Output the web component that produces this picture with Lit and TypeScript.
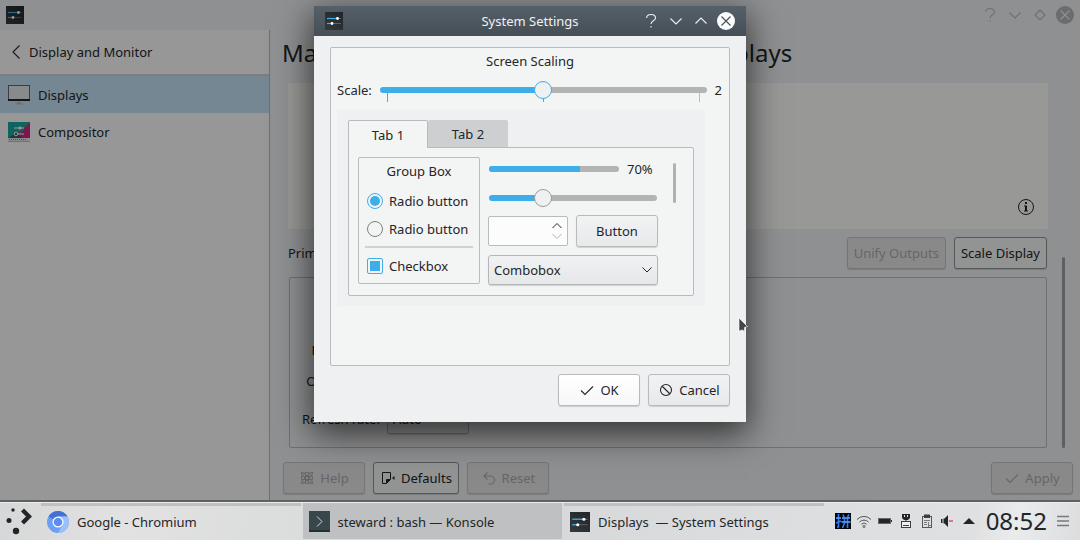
import { LitElement, html, css } from "lit";
import { customElement, state } from "lit/decorators.js";
import { classMap } from "lit/directives/class-map.js";

const stroke = (d: string, size = 16) => html`
  <svg class="icon" width=${size} height=${size} viewBox="0 0 16 16" aria-hidden="true">
    <path d=${d} fill="none" stroke="currentColor" stroke-width="1.1" />
  </svg>`;

const settingsIcon = (size: number) => html`
  <svg class="icon" width=${size} height=${size} viewBox="0 0 18 18" aria-hidden="true">
    <defs><linearGradient id="sg" x1="0" y1="1" x2="1" y2="0">
      <stop offset="0" stop-color="#35393d" /><stop offset="1" stop-color="#222528" />
    </linearGradient></defs>
    <rect width="18" height="18" fill="url(#sg)" />
    <path d="M2 6.5H12" stroke="#3daee9" stroke-width="1.2" />
    <path d="M12 6.5H16M7 11.5H16" stroke="#5d6266" stroke-width="1" />
    <path d="M2 11.5H7" stroke="#3daee9" stroke-width="1.2" />
    <circle cx="12.5" cy="6.5" r="1.4" fill="#fff" />
    <circle cx="7" cy="11.5" r="1.4" fill="#fff" />
  </svg>`;

const icons = {
  help: "M3.500 5C3.800 2.500 5.500 1.500 8 1.500S12.500 2.800 12.500 5C12.500 8 8 7.500 8 11M8 13V14.500",
  down: "M2.500 5.500L8 11L13.500 5.500",
  up: "M2.500 10.500L8 5L13.500 10.500",
  diamond: "M8 3L13 8L8 13L3 8Z",
  back: "M11.500 1.500L5 8L11.500 14.500",
  check: "M2 8.500L6 12.500L14 4.500",
  cancel: "M8 2.500A5.500 5.500 0 1 1 8 13.500A5.500 5.500 0 1 1 8 2.500M4 4L12 12",
  undo: "M6.500 2.500L3 6L6.500 9.500M3 6H9.500A4 4 0 0 1 9.500 14H7.500",
  buoy: "M8 2.500A5.500 5.500 0 1 1 8 13.500A5.500 5.500 0 1 1 8 2.500M8 5.500A2.500 2.500 0 1 1 8 10.500A2.500 2.500 0 1 1 8 5.500M6.500 2.500V13.500M9.500 2.500V13.500M2.500 6.500H13.500M2.500 9.500H13.500M2.500 2.500H4.500M2.500 2.500V4.500M11.500 2.500H13.500V4.500M2.500 11.500V13.500H4.500M13.500 11.500V13.500H11.500",
};

@customElement("app-root")
export class AppRoot extends LitElement {
  static styles = css`
    :host {
      display: grid;
      grid-template-rows: minmax(0, 1fr) auto;
      position: relative;
      height: 100vh;
      overflow: hidden;
      font: 13px/18px "Noto Sans", sans-serif;
      color: #232629;
      background: #dcddde;
    }
    *, *::before, *::after { box-sizing: border-box; }
    button, select, input { font: inherit; color: inherit; margin: 0; }
    h1, h2, p, ul { margin: 0; padding: 0; font-weight: 400; }
    .icon { display: block; flex: none; }

    .window {
      position: relative;
      display: flex;
      flex-direction: column;
      min-height: 0;
      background: #eff0f2;
      border-bottom: 2px solid #a0a1a2;
    }
    .window::after {
      content: "";
      position: absolute;
      inset: 0 0 -2px;
      background: rgba(0, 0, 0, 0.4);
    }
    .bar {
      display: flex;
      align-items: center;
      justify-content: space-between;
      height: 30px;
      padding: 0 6px;
      flex: none;
    }
    .controls { display: flex; align-items: center; gap: 7px; }
    .controls button {
      display: grid;
      place-items: center;
      width: 18px;
      height: 18px;
      padding: 0;
      border: 0;
      border-radius: 9px;
      background: none;
    }
    .window .controls { color: #b7b9bb; }
    .window .controls .close { background: #b2b5b7; color: #eff0f1; }
    .body { display: flex; flex: 1; min-height: 0; }

    .side { width: 270px; flex: none; background: #fcfcfc; border-right: 1px solid #b9babb; }
    .back {
      display: flex;
      align-items: center;
      gap: 5px;
      width: 100%;
      height: 46px;
      padding: 0 8px;
      border: 0;
      border-bottom: 2px solid #d2d3d3;
      background: none;
    }
    .side ul { list-style: none; }
    .side a {
      display: flex;
      align-items: center;
      gap: 8px;
      height: 38px;
      padding: 0 8px;
      color: inherit;
      text-decoration: none;
    }
    .side .current { background: #c1e2f6; height: 37px; }

    .main { flex: 1; min-width: 0; display: flex; flex-direction: column; padding: 5px 7px 6px 13px; }
    .main h1 { margin-left: -1px; font-size: 24px; line-height: 36px; white-space: nowrap; }
    .page { display: grid; grid-template-columns: 1fr auto; margin: 12px 8px 0 5px; flex: 1; min-height: 0; column-gap: 14px; }
    .content { display: flex; flex-direction: column; min-height: 0; }
    .view {
      display: flex;
      align-items: flex-end;
      justify-content: flex-end;
      height: 146px;
      padding: 13px;
      background: #fdfdfc;
    }
    .outputs { display: flex; align-items: center; gap: 8px; padding: 8px 1px 8px 0; }
    .outputs label { flex: 1; }
    .frame {
      display: grid;
      grid-template-columns: max-content auto;
      justify-content: start;
      align-content: end;
      align-items: center;
      gap: 8px 7px;
      height: 171px;
      margin: 0 1px;
      padding: 0 12px 13px;
      border: 1px solid #babbbc;
      border-radius: 2px;
      text-align: right;
    }
    .frame select { width: 82px; }
    .frame .line { line-height: 16px; }
    .frame .box { height: 30px; line-height: 30px; }
    .scroll { width: 3px; height: 191px; margin-top: 174px; border-radius: 2px; background: #9fa0a2; }
    .actions { display: flex; gap: 8px; padding-top: 15px; }
    .actions > :last-child { margin-left: auto; }

    .btn {
      display: inline-flex;
      align-items: center;
      justify-content: center;
      gap: 5px;
      height: 32px;
      min-width: 82px;
      padding: 0 6px;
      border: 1px solid #b9babc;
      border-radius: 3px;
      background: linear-gradient(#f1f2f3, #e8e9eb);
      box-shadow: 0 1px 1px rgba(0, 0, 0, 0.15);
      white-space: nowrap;
    }
    .window .btn { border-color: #8f9192; background: #f4f5f5; }
    .window .btn:disabled { color: #a9abac; border-color: #c3c4c5; background: #e4e5e7; }
    .btn.primary { background: linear-gradient(#ffffff, #f7f7f7); }
    select {
      appearance: none;
      height: 30px;
      padding: 0 5px;
      border: 1px solid #b5b6b8;
      border-radius: 3px;
      background: linear-gradient(#f1f2f3, #e6e7e9);
      box-shadow: 0 1px 1px rgba(0, 0, 0, 0.15);
    }

    .dialog {
      position: absolute;
      left: 314px;
      top: 6px;
      width: 432px;
      background: #eff0f2;
      box-shadow: 0 10px 32px 2px rgba(0, 0, 0, 0.65);
    }
    .dialog .bar {
      display: grid;
      grid-template-columns: 1fr auto 1fr;
      padding: 0 11px;
      color: #eff0f1;
      background: linear-gradient(#54606a, #464e56);
    }
    .dialog .bar h2 { font-size: 13px; line-height: 18px; }
    .dialog .controls { justify-content: flex-end; }
    .dialog .close { background: #fcfcfc; color: #454d54; }
    .dialog .inner { padding: 11px 16px 16px; }
    .group { border: 1px solid #b9bbbd; border-radius: 2px; background: #f3f4f4; }
    .group > h2 { font-size: 13px; line-height: 18px; text-align: center; }
    .scaling { height: 319px; padding: 4px 6px; }
    .scale { display: flex; align-items: center; gap: 8px; height: 39px; }
    .scale output { margin-right: 1px; }
    .slide { position: relative; display: grid; flex: 1; align-items: center; }
    .slide input, .ticks { grid-area: 1 / 1; }
    .ticks { display: flex; justify-content: space-between; padding: 15px 7px 0; }
    .ticks i { width: 1px; height: 9px; background: #3daee9; }
    .ticks i:last-child { background: #babbbc; }

    input[type="range"] {
      appearance: none;
      display: block;
      position: relative;
      width: 100%;
      height: 18px;
      background: none;
    }
    input[type="range"]::-webkit-slider-runnable-track {
      height: 6px;
      border-radius: 3px;
      background: linear-gradient(to right, #3daee9 var(--fill), #b3b3b3 0);
    }
    input[type="range"]::-webkit-slider-thumb {
      appearance: none;
      width: 18px;
      height: 18px;
      margin-top: -6px;
      border: 1px solid #9b9c9e;
      border-radius: 50%;
      background: #eff0f2;
    }
    .scale input[type="range"]::-webkit-slider-thumb { border-color: #3daee9; }

    .preview { width: 368px; padding: 11px 11px 10px; background: #eff0f2; }
    .tabs { display: flex; }
    .tab {
      width: 80px;
      height: 27px;
      padding: 0;
      border: 0;
      border-radius: 2px 2px 0 0;
      background: #cecfd1;
    }
    .tab.active {
      position: relative;
      height: 28px;
      margin-bottom: -1px;
      border: 1px solid #b9bbbd;
      border-bottom: 0;
      background: #f3f4f4;
    }
    .panel {
      display: grid;
      grid-template-columns: 122px 170px auto;
      gap: 8px;
      padding: 9px 16px 10px 9px;
      border: 1px solid #b9bbbd;
      border-radius: 0 2px 2px 2px;
      background: #f3f4f4;
      align-items: start;
    }
    .box-group { padding: 4px 6px 3px; }
    .choice { display: flex; align-items: center; gap: 6px; height: 28px; padding-left: 2px; }
    .box-group h2 { margin-bottom: 7px; }
    .box-group hr { margin: 3px 0 4px; border: 0; border-top: 2px solid #d0d1d2; }
    .choice input {
      appearance: none;
      display: grid;
      place-items: center;
      width: 16px;
      height: 16px;
      border: 1px solid #7e8082;
      background: #f3f4f4;
      flex: none;
    }
    .choice input[type="radio"] { border-radius: 50%; }
    .choice input[type="checkbox"] { border-radius: 2px; }
    .choice input:checked { border-color: #3daee9; }
    .choice input:checked::before { content: ""; width: 10px; height: 10px; background: #3daee9; }
    .choice input[type="radio"]:checked::before { border-radius: 50%; }

    .column { display: flex; flex-direction: column; }
    .progress { display: flex; align-items: center; gap: 8px; height: 24px; padding: 0 1px; }
    progress { appearance: none; display: block; width: 130px; height: 6px; }
    progress::-webkit-progress-bar { background: #b3b3b3; border-radius: 3px; overflow: hidden; }
    progress::-webkit-progress-value { background: #3daee9; }
    .second { padding: 8px 1px; }
    .pair { display: flex; gap: 8px; align-items: center; }
    .spin {
      display: flex;
      align-items: center;
      width: 80px;
      height: 30px;
      padding: 0 2px 0 4px;
      border: 1px solid #b9bbbd;
      border-radius: 2px;
      background: #fcfcfc;
    }
    .spin input { flex: 1; min-width: 0; height: 24px; padding: 0; border: 0; outline: 0; background: none; }
    .spin div { display: grid; }
    .spin button { display: block; height: 10px; padding: 0; border: 0; background: none; }
    .spin .dim { color: #b0b1b2; }
    .combo { display: grid; align-items: center; margin-top: 8px; }
    .combo select, .combo .icon { grid-area: 1 / 1; }
    .combo .icon { justify-self: end; margin-right: 4px; pointer-events: none; z-index: 1; }
    .vbar { width: 3px; height: 40px; margin: 6px 0 0 7px; border-radius: 2px; background: #b0b1b2; }
    .buttons { display: flex; justify-content: flex-end; gap: 8px; padding-top: 8px; }

    .pointer { position: absolute; left: 738px; top: 317px; }

    .panelbar {
      display: flex;
      align-items: center;
      gap: 8px;
      height: 38px;
      padding: 0 10px 1px 5px;
      background: linear-gradient(100deg, #d6d7d8, #e2e2e2 12%, #dcdddd 24%, #d7d8d9 50%, #dddedf 75%, #dfe0e1 90%, #eaebec 94%, #dcddde);
      border-top: 1px solid #ecedee;
    }
    .tasks { display: grid; grid-template-columns: repeat(3, minmax(0, 1fr)); gap: 2px; flex: 1; height: 36px; margin-right: 3px; }
    .task {
      display: flex;
      align-items: center;
      gap: 8px;
      padding: 0 6px 2px;
      border: 0;
      border-top: 3px solid #bfc0c1;
      background: none;
      white-space: pre;
    }
    .task.mini { background: #bfc0c1; }
    .tray { display: flex; align-items: center; gap: 5px; }
    .tray button, .start { padding: 0; border: 0; background: none; }
    .clock { margin-left: 4px; font-size: 24px; line-height: 34px; }
    .menu { margin-left: 4px; }
  `;

  @state() private scale = 2;
  @state() private level = 30;
  @state() private tab = 0;

  private controls(mid: string) {
    return html`<div class="controls">
      <button aria-label="Help">${stroke(icons.help)}</button>
      <button aria-label="Minimize">${stroke(icons.down)}</button>
      <button aria-label="Maximize">${stroke(mid)}</button>
      <button class="close" aria-label="Close">${stroke("M3.500 3.500L12.500 12.500M12.500 3.500L3.500 12.500")}</button>
    </div>`;
  }

  private displayIcon() {
    return html`<svg class="icon" width="22" height="22" viewBox="0 0 22 22" aria-hidden="true">
      <rect x="0.500" y="1.500" width="21" height="15" fill="#e3e6e8" stroke="#63686b" />
      <rect y="15" width="22" height="2" fill="#232629" />
      <path d="M9 18H13V19.500H15V20.500H7V19.500H9Z" fill="#b5b9bb" />
    </svg>`;
  }

  private compositorIcon() {
    return html`<svg class="icon" width="22" height="22" viewBox="0 0 22 22" aria-hidden="true">
      <rect y="1" width="22" height="17" fill="#18a99b" />
      <path d="M22 1V18H8Z" fill="#d6247f" /><path d="M22 1L8 15L14 18H0L10 11Z" fill="#bd3a8d" opacity="0.500" />
      <path d="M0 17L8 12L15 17V18H0Z" fill="#49525a" />
      <path d="M6 7H16M8 13H16" stroke="#fff" stroke-width="1" />
      <circle cx="12" cy="7" r="1.600" fill="#fff" /><circle cx="8" cy="13" r="1.800" fill="#49525a" stroke="#fff" />
      <rect y="17" width="22" height="3" fill="#e7e8e8" />
      <path d="M1 18.500H19" stroke="#888" stroke-dasharray="1 1" /><path d="M0 20.500H22" stroke="#bbb" />
    </svg>`;
  }

  private renderWindow() {
    return html`<section class="window">
      <div class="bar">${settingsIcon(18)}${this.controls(icons.diamond)}</div>
      <div class="body">
        <nav class="side">
          <button class="back">${stroke(icons.back)}Display and Monitor</button>
          <ul>
            <li><a class="current" href="#displays">${this.displayIcon()}Displays</a></li>
            <li><a href="#compositor">${this.compositorIcon()}Compositor</a></li>
          </ul>
        </nav>
        <div class="main">
          <h1>Manage and configure monitors and displays</h1>
          <div class="page">
            <div class="content">
              <div class="view">
                <svg class="icon" width="18" height="18" viewBox="0 0 18 18" aria-hidden="true">
                  <circle cx="9" cy="9" r="7.500" fill="none" stroke="#232629" />
                  <path d="M8 4H10V6H8ZM7 7.500H10V12.500H11V13.500H7V12.500H8V8.500H7Z" fill="#232629" />
                </svg>
              </div>
              <div class="outputs">
                <label>Primary display:</label>
                <button class="btn" disabled>Unify Outputs</button>
                <button class="btn">Scale Display</button>
              </div>
              <div class="frame">
                <span class="line">Resolution:</span><span></span>
                <span class="box">Orientation:</span><span></span>
                <label class="box" for="rate">Refresh rate:</label>
                <select id="rate"><option>Auto</option></select>
              </div>
            </div>
            <div class="scroll"></div>
          </div>
          <div class="actions">
            <button class="btn" disabled>${stroke(icons.buoy)}Help</button>
            <button class="btn">
              <svg class="icon" width="16" height="16" viewBox="0 0 16 16" aria-hidden="true">
                <path d="M2.500 2.500H10.500V9.500L6.500 13.500H2.500ZM6.500 13V9.500H10" fill="none" stroke="#232629" />
                <path d="M7 10H10L7 13ZM12 8L14.500 6V10Z" fill="#232629" />
              </svg>Defaults</button>
            <button class="btn" disabled>${stroke(icons.undo)}Reset</button>
            <button class="btn" disabled>${stroke(icons.check)}Apply</button>
          </div>
        </div>
      </div>
    </section>`;
  }

  private renderDialog() {
    return html`<section class="dialog" role="dialog" aria-labelledby="title">
      <div class="bar">${settingsIcon(18)}<h2 id="title">System Settings</h2>${this.controls(icons.up)}</div>
      <div class="inner">
        <div class="group scaling">
          <h2>Screen Scaling</h2>
          <div class="scale">
            <label for="scale">Scale:</label>
            <div class="slide">
              <div class="ticks"><i></i><i></i><i></i></div>
              <input id="scale" type="range" min="1" max="3" step="0.1" .value=${String(this.scale)}
                style="--fill:${(this.scale - 1) * 50}%"
                @input=${(e: Event) => (this.scale = Number((e.target as HTMLInputElement).value))} />
            </div>
            <output for="scale">${this.scale}</output>
          </div>
          <div class="preview">
            <div class="tabs" role="tablist">
              ${["Tab 1", "Tab 2"].map((name, i) => html`
                <button role="tab" aria-selected=${this.tab === i} @click=${() => (this.tab = i)}
                  class=${classMap({ tab: true, active: this.tab === i })}>${name}</button>`)}
            </div>
            <div class="panel">
              <div class="group box-group">
                <h2>Group Box</h2>
                <label class="choice"><input type="radio" name="r" checked />Radio button</label>
                <label class="choice"><input type="radio" name="r" />Radio button</label>
                <hr />
                <label class="choice"><input type="checkbox" checked />Checkbox</label>
              </div>
              <div class="column">
                <div class="progress"><progress max="100" value="70" aria-label="Progress"></progress><span>70%</span></div>
                <div class="second">
                  <input type="range" aria-label="Level" min="0" max="100" .value=${String(this.level)}
                    style="--fill:${this.level}%"
                    @input=${(e: Event) => (this.level = Number((e.target as HTMLInputElement).value))} />
                </div>
                <div class="pair">
                  <div class="spin">
                    <input type="text" aria-label="Value" />
                    <div>
                      <button aria-label="Increase"><svg class="icon" width="16" height="10" viewBox="0 0 16 10"><path d="M3.500 7L8 2.500L12.500 7" fill="none" stroke="currentColor" /></svg></button>
                      <button class="dim" aria-label="Decrease"><svg class="icon" width="16" height="10" viewBox="0 0 16 10"><path d="M3.500 3L8 7.500L12.500 3" fill="none" stroke="currentColor" /></svg></button>
                    </div>
                  </div>
                  <button class="btn">Button</button>
                </div>
                <div class="combo">
                  <select aria-label="Combobox"><option>Combobox</option></select>
                  <svg class="icon" width="14" height="14" viewBox="0 0 14 14"><path d="M2.500 4.500L7 9L11.500 4.500" fill="none" stroke="#232629" /></svg>
                </div>
              </div>
              <div class="vbar"></div>
            </div>
          </div>
        </div>
        <div class="buttons">
          <button class="btn primary">${stroke(icons.check)}OK</button>
          <button class="btn">${stroke(icons.cancel)}Cancel</button>
        </div>
      </div>
    </section>`;
  }

  private renderTaskbar() {
    return html`<footer class="panelbar">
      <button class="start" aria-label="Application launcher">
        <svg class="icon" width="28" height="28" viewBox="0 0 28 28">
          <circle cx="8" cy="3" r="1.700" fill="#232629" /><circle cx="4" cy="13.500" r="2.500" fill="#232629" />
          <circle cx="11" cy="24" r="3.200" fill="#232629" />
          <path d="M17.500 3L24 9.500L17.500 16" fill="none" stroke="#232629" stroke-width="4.200" />
        </svg>
      </button>
      <div class="tasks">
        <button class="task">
          <svg class="icon" width="22" height="22" viewBox="0 0 22 22">
            <circle cx="11" cy="11" r="11" fill="#6a9ff5" />
            <path d="M11 11L1.500 5.500A11 11 0 0 1 20.500 5.500H11Z" fill="#4370d2" />
            <path d="M11 5.500H20.500A11 11 0 0 1 11 22L15.800 13.800Z" fill="#9dc0fb" />
            <circle cx="11" cy="11" r="5.500" fill="#fff" /><circle cx="11" cy="11" r="4.300" fill="#5b8def" />
          </svg>Google - Chromium</button>
        <button class="task mini">
          <svg class="icon" width="21" height="21" viewBox="0 0 21 21">
            <rect width="21" height="21" fill="#37474a" /><rect y="19" width="21" height="2" fill="#242f31" />
            <path d="M8 5.500L13 10.500L8 15.500" fill="none" stroke="#d5dadb" />
          </svg>steward : bash — Konsole</button>
        <button class="task">${settingsIcon(20)}Displays  — System Settings</button>
      </div>
      <div class="tray">
        <svg class="icon" width="16" height="16" viewBox="0 0 16 16">
          <rect width="16" height="16" fill="#05070d" />
          <path d="M1 5H6M3.500 1V14H2M1 10L6 8M8 1.500L9 4M14 1.500L12.500 4M7 5H15M6.500 9H15.500M9.500 5V10L7.500 15M12.500 5V15" fill="none" stroke="#2f7df0" stroke-width="1.600" />
          <path d="M1 5H6M7 5H15M6.500 9H15.500" stroke="#a8cdff" stroke-width="0.600" />
        </svg>
        <svg class="icon" width="16" height="16" viewBox="0 0 16 16">
          <g fill="none" stroke="#54585a"><path d="M1 6.500A9.500 9.500 0 0 1 15 6.500M3.500 9A6.300 6.300 0 0 1 12.500 9" />
          <path d="M5.500 11.200A3.500 3.500 0 0 1 10.500 11.200" /><circle cx="8" cy="13.500" r="1" /></g>
        </svg>
        <svg class="icon" width="16" height="16" viewBox="0 0 16 16">
          <rect x="1.500" y="5.500" width="12" height="5" fill="#232629" stroke="#66696b" /><rect x="14" y="7" width="1" height="2" fill="#232629" />
        </svg>
        <svg class="icon" width="16" height="16" viewBox="0 0 16 16">
          <path d="M4 1H12V5L10 7H6L4 5Z" fill="#232629" /><path d="M6 2H7V4H6ZM9 2H10V4H9Z" fill="#ddd" />
          <rect x="3.500" y="8.500" width="9" height="6" fill="#f0f0f0" stroke="#3b3f41" /><path d="M5 12.500H11M8 7V9" stroke="#3b3f41" />
        </svg>
        <svg class="icon" width="16" height="16" viewBox="0 0 16 16">
          <rect x="3.500" y="3.500" width="9" height="11" fill="none" stroke="#54585a" /><path d="M5 1.500H11V5H5Z" fill="#3b3f41" />
          <path d="M5 7.500H11M5 9.500H8M5 11.500H8M9.500 9V14M9 12.500H12" stroke="#77797b" />
        </svg>
        <svg class="icon" width="16" height="16" viewBox="0 0 16 16">
          <path d="M1 6H2.500V10H1ZM3.500 5.500H4.500L8 2V14L4.500 10.500H3.500Z" fill="#232629" /><path d="M9 8H13" stroke="#e5505c" stroke-width="1.500" />
        </svg>
        <svg class="icon" width="16" height="16" viewBox="0 0 16 16"><path d="M2 11L8 5L14 11Z" fill="#232629" /></svg>
        <time class="clock">08:52</time>
        <button class="menu" aria-label="Panel settings">
          <svg class="icon" width="14" height="16" viewBox="0 0 14 16"><path d="M1 3.500H13M1 8H13M1 12.500H13" stroke="#77797b" stroke-width="1.500" /></svg>
        </button>
      </div>
    </footer>`;
  }

  render() {
    return html`
      ${this.renderWindow()}
      ${this.renderTaskbar()}
      ${this.renderDialog()}
      <svg class="pointer" width="11" height="18" viewBox="0 0 11 18" aria-hidden="true">
        <path d="M1 1L9.500 9.500L6.500 10.500V14.500L4.500 13L1 14Z" fill="#43484c" stroke="#fff" stroke-width="0.600" />
      </svg>`;
  }
}
